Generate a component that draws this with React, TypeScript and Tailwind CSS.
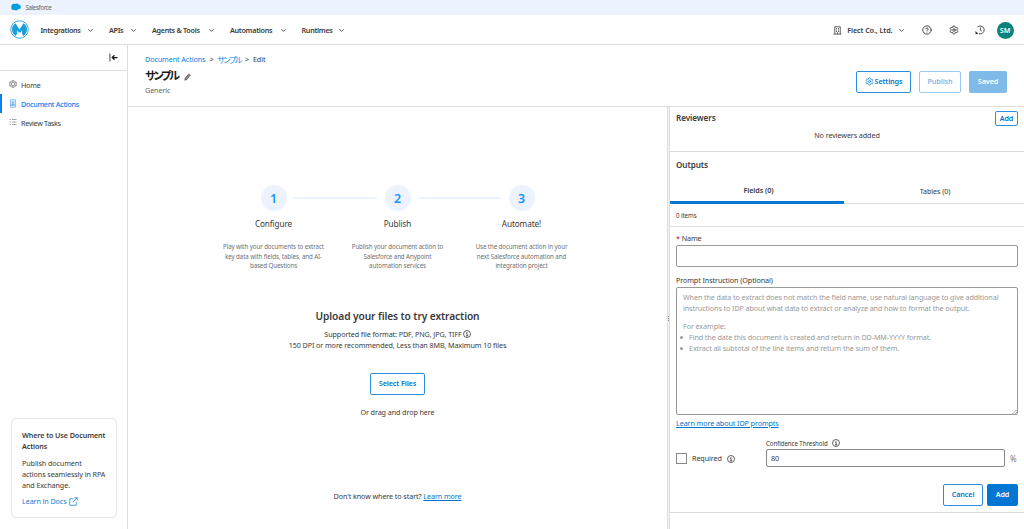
import React from "react";
import { ChevronDown, CircleHelp, Settings } from "lucide-react";

const navItems = [
  { label: "Integrations", width: "w-[68.500px]" },
  { label: "APIs", width: "w-[43px]" },
  { label: "Agents & Tools", width: "w-[78px]" },
  { label: "Automations", width: "w-[71.500px]" },
  { label: "Runtimes", width: "w-[58.500px]" },
];

const steps = [
  { id: 1, title: "Configure", lines: ["Play with your documents to extract", "key data with fields, tables, and AI-", "based Questions"] },
  { id: 2, title: "Publish", lines: ["Publish your document action to", "Salesforce and Anypoint", "automation services"] },
  { id: 3, title: "Automate!", lines: ["Use the document action in your", "next Salesforce automation and", "integration project"] },
];

const MuleLogo = () => (
  <svg className="h-[19px] w-[19px]" viewBox="0 0 38 38" fill="none">
    <circle cx="19" cy="19" r="17.500" stroke="#1c9edb" strokeWidth="1.800" />
    <path d="M11 6.500L19 19L27 6.500C31.500 9.300 34 13.800 34 19C34 24.500 31 29.300 26.500 32L24 27.500V20.500L21 25H17L14 20.500V27.500L11.500 32C7 29.300 4 24.500 4 19C4 13.800 6.500 9.300 11 6.500Z" fill="#1c9edb" />
  </svg>
);

const Cloud = () => (
  <svg className="h-[8px] w-[10px]" viewBox="0 0 20 15" fill="#009ddc">
    <circle cx="6" cy="6" r="5" />
    <circle cx="11.500" cy="5" r="4.500" />
    <circle cx="15.500" cy="7.500" r="4.300" />
    <circle cx="4.500" cy="9.500" r="4" />
    <circle cx="10" cy="10" r="4.500" />
  </svg>
);

const BuildingIcon = () => (
  <svg className="h-[9px] w-[9px]" viewBox="0 0 18 18" fill="none" stroke="#444" strokeWidth="1.700">
    <path d="M3.500 16V1.500H14.500V16M1 16.200H17M7 4V7M11 4V7M7 9V12M11 9V12M9 12.500V16" />
  </svg>
);

const HistoryIcon = () => (
  <svg className="h-[10px] w-[10px]" viewBox="0 0 20 20" fill="none" stroke="#333" strokeWidth="1.700">
    <path d="M5 4A8 8 0 1 1 8 17.500M11 5V10.500L13.500 12.500" />
    <path d="M1 12V18H7Z" fill="#333" stroke="none" />
  </svg>
);

const CollapseIcon = () => (
  <svg className="h-[9px] w-[9px]" viewBox="0 0 18 18" fill="none" stroke="#181818" strokeWidth="2.500">
    <path d="M1.800 1V17" stroke="#666" />
    <path d="M17 9H6.500M11 4.500L6.500 9L11 13.500" />
  </svg>
);

const CubeIcon = () => (
  <svg className="h-[8px] w-[8px]" viewBox="0 0 16 16" fill="none" stroke="#666" strokeWidth="1.300">
    <path d="M8 1L14.500 4.500V11.500L8 15L1.500 11.500V4.500Z" />
    <path d="M8 4.500L11 6.300V9.700L8 11.500L5 9.700V6.300ZM1.500 4.500L5 6.300M14.500 4.500L11 6.300M8 11.500V15M1.500 11.500L5 9.700M14.500 11.500L11 9.700M8 1V4.500" />
  </svg>
);

const DocIcon = () => (
  <svg className="h-[9px] w-[8px]" viewBox="0 0 16 18" fill="none" stroke="#4b9ff2" strokeWidth="1.300">
    <path d="M3 1.500H13V16.500H3ZM5 4.500H11M5 7H11" />
    <path d="M5.500 9.500H10.500V13.500H5.500Z" fill="#8dc3f8" />
  </svg>
);

const ListIcon = () => (
  <svg className="h-[8px] w-[8px]" viewBox="0 0 16 16" fill="none" stroke="#777" strokeWidth="1.300">
    <path d="M1 3L2 4L4 2M6 3H15M1 8H4M6 8H15M1 13H4M6 13H15" />
  </svg>
);

const PencilIcon = () => (
  <svg className="h-[8px] w-[7px]" viewBox="0 0 14 16" fill="#666">
    <path d="M9.500 1L13.500 4.500L5.500 14L1 15.500L1.500 10.500Z" />
    <path d="M8 3.500L11.500 6.500M4 12L9 6.500" stroke="white" strokeWidth="0.700" />
  </svg>
);

const InfoIcon = ({ className = "" }: { className?: string }) => (
  <svg className={`h-[8px] w-[8px] shrink-0 ${className}`} viewBox="0 0 16 16" fill="none" stroke="#333" strokeWidth="1.500">
    <circle cx="8" cy="8" r="7" />
    <path d="M6.300 7H8.300V11.500M6 11.700H10.500M8 3.700V5.500" strokeWidth="1.600" />
  </svg>
);

const ExternalIcon = () => (
  <svg className="ml-[2px] h-[9px] w-[9px]" viewBox="0 0 18 18" fill="none" stroke="#0b7fda" strokeWidth="1.500">
    <path d="M8 3.500H1.500V16.500H14.500V10M11 1.500H16.500V7M16.500 1.500L7.500 10.500" />
  </svg>
);

const App = () => {
  return (
    <div className="flex h-[529px] w-[1024px] flex-col overflow-hidden bg-white font-['Noto_Sans','Noto_Sans_CJK_JP',sans-serif] text-[7.200px] leading-[11px] tracking-[-0.013em] text-[#3a3a3a]">
      <div className="flex h-[15px] shrink-0 items-center bg-[#ecf3ff] pb-[1px] pl-[11px]">
        <Cloud />
        <span className="ml-[4.500px] pt-[1px] text-[6.200px] tracking-[-0.060em] text-[#666]">Salesforce</span>
      </div>
      <header className="flex h-[30px] shrink-0 items-center border-b border-[#ddd] pr-[10.500px] pl-[10px]">
        <MuleLogo />
        <nav className="ml-[11.500px] flex pt-[1px] font-semibold tracking-[-0.040em]">
          {navItems.map((item) => (
            <div key={item.label} className={`flex items-center ${item.width}`}>
              <button className="whitespace-nowrap">{item.label}</button>
              <ChevronDown className="mr-[15px] ml-auto h-[7px] w-[7px]" strokeWidth={3} />
            </div>
          ))}
        </nav>
        <div className="ml-auto flex items-center pt-[1px]">
          <BuildingIcon />
          <span className="ml-[5px] font-semibold">Flect Co., Ltd.</span>
          <ChevronDown className="ml-[5px] h-[7px] w-[7px]" strokeWidth={3} />
          <CircleHelp className="ml-[17px] h-[10px] w-[10px]" strokeWidth={2.200} />
          <Settings className="ml-[17px] h-[10px] w-[10px]" strokeWidth={2.200} />
          <span className="ml-[16px]"><HistoryIcon /></span>
          <div className="ml-[12px] flex h-[17px] w-[17px] items-center justify-center rounded-full bg-[#0b827c] font-semibold text-white">SM</div>
        </div>
      </header>

      <div className="flex min-h-0 flex-1">
        <aside className="flex w-[128px] shrink-0 flex-col border-r border-[#ddd]">
          <div className="flex h-[26px] items-center justify-end border-b border-[#ddd] pr-[9px]">
            <CollapseIcon />
          </div>
          <ul className="pt-[4px] tracking-[-0.045em]">
            <li className="flex h-[19px] items-center pl-[9px]"><span className="pb-[2px]"><CubeIcon /></span><span className="ml-[4px] pt-[1px] tracking-[-0.030em]">Home</span></li>
            <li className="flex h-[19px] items-center border-l-2 border-[#0b7fee] pl-[7px] font-medium text-[#0b7fee]"><span className="pb-[1px]"><DocIcon /></span><span className="ml-[4px] pt-[1px]">Document Actions</span></li>
            <li className="flex h-[19px] items-center pl-[9px]"><span className="pb-[1px]"><ListIcon /></span><span className="ml-[4px] pt-[1px]">Review Tasks</span></li>
          </ul>
          <div className="mt-auto mb-[11px] ml-[11px] h-[100px] w-[106px] rounded-[4px] border border-[#e5e5e5] px-[10px] pt-[11px]">
            <h3 className="font-semibold whitespace-nowrap">Where to Use Document<br />Actions</h3>
            <p className="mt-[6px] whitespace-nowrap">Publish document<br />actions seamlessly in RPA<br />and Exchange.</p>
            <a className="mt-[5px] flex items-center text-[#0b7fda]">Learn in Docs<ExternalIcon /></a>
          </div>
        </aside>

        <main className="flex min-w-0 flex-1 flex-col">
          <div className="flex h-[62px] shrink-0 border-b border-[#ddd] pr-[17px] pl-[17px]">
            <div className="pt-[9px]">
              <div className="flex gap-[4px]">
                <span className="text-[#0b7fda]">Document Actions</span><span>&gt;</span>
                <span className="text-[8px] tracking-[-0.180em] text-[#0b7fda] [font-feature-settings:'palt']">サンプル</span><span>&gt;</span><span>Edit</span>
              </div>
              <div className="mt-[3px] flex h-[16px] items-center">
                <h1 className="text-[11px] leading-[16px] font-bold tracking-[-0.190em] text-[#181818] [font-feature-settings:'palt']">サンプル</h1>
                <span className="ml-[6px] pt-[2px]"><PencilIcon /></span>
              </div>
              <p className="pt-[1px] text-[#666]">Generic</p>
            </div>
            <div className="ml-auto flex gap-[8px] pt-[26px] font-semibold">
              <button className="flex h-[21.500px] w-[55px] items-center justify-center rounded-[2px] border border-[#2b8ee0] text-[#0176d3]"><Settings className="mr-[1px] h-[9px] w-[9px]" strokeWidth={1.8} />Settings</button>
              <button className="h-[21.500px] w-[42px] rounded-[2px] border border-[#9bcaf0] text-[#80bae9]">Publish</button>
              <button className="h-[21.500px] w-[38px] rounded-[2px] bg-[#80bae9] text-white">Saved</button>
            </div>
          </div>

          <div className="flex min-h-0 flex-1">
            <section className="flex w-[539px] shrink-0 flex-col items-center text-center">
              <div className="mt-[78px] flex items-start">
                {steps.map((step, i) => (
                  <React.Fragment key={step.id}>
                    {i > 0 && <div className="-mx-[33px] mt-[12px] h-[2px] w-[83px] bg-[#ecf3ff]" />}
                    <div className="flex w-[107px] flex-col items-center">
                      <div className="flex h-[26px] w-[26px] items-center justify-center rounded-full bg-[#ecf3ff] text-[12.500px] font-semibold text-[#1b96ff]">{step.id}</div>
                      <h2 className="mt-[7px] text-[8.200px] leading-[12px]">{step.title}</h2>
                      <p className="mt-[12px] text-[6.200px] leading-[9.600px] tracking-[-0.016em] whitespace-nowrap text-[#707070]">
                        {step.lines.map((line) => <span key={line} className="block">{line}</span>)}
                      </p>
                    </div>
                  </React.Fragment>
                ))}
              </div>
              <h2 className="mt-[37px] text-[10.200px] leading-[16px] font-semibold">Upload your files to try extraction</h2>
              <p className="mt-[5px] flex items-center">Supported file format: PDF, PNG, JPG, TIFF<InfoIcon className="ml-[1px]" /></p>
              <p>150 DPI or more recommended, Less than 8MB, Maximum 10 files</p>
              <button className="mt-[22px] h-[22px] w-[55px] rounded-[2px] border border-[#2b8ee0] font-semibold text-[#0176d3]">Select Files</button>
              <p className="mt-[12px]">Or drag and drop here</p>
              <p className="mt-[73px]">Don't know where to start? <a className="text-[#0176d3] underline">Learn more</a></p>
            </section>

            <div className="flex w-[3px] shrink-0 flex-col items-center justify-center gap-[1px] border-r border-l border-[#ddd] bg-[#f3f3f3]">
              <span className="h-px w-px bg-[#999]" />
              <span className="h-px w-px bg-[#999]" />
              <span className="h-px w-px bg-[#999]" />
            </div>

            <section className="min-w-0 flex-1">
              <div className="h-[44.500px] border-b border-[#ddd] pt-[4px] pr-[6px] pl-[6px]">
                <div className="flex justify-between">
                  <h2 className="pt-[1px] text-[8.200px] font-semibold">Reviewers</h2>
                  <button className="h-[15px] w-[23px] rounded-[2px] border border-[#2b8ee0] font-semibold text-[#0176d3]">Add</button>
                </div>
                <p className="mt-[4px] text-center">No reviewers added</p>
              </div>
              <h2 className="pt-[7px] pl-[6px] text-[8.200px] font-semibold">Outputs</h2>
              <div className="mt-[10px] flex h-[24px] text-center leading-[21px]">
                <button className="w-[174px] rounded-b-[1px] border-b-[3px] border-[#0176d3] pl-[3px] font-semibold">Fields (0)</button>
                <button className="flex-1 border-b border-[#ddd] pl-[2px]">Tables (0)</button>
              </div>
              <p className="h-[23px] border-b border-[#ddd] pl-[6px] text-[6.200px] leading-[23px]">0 items</p>
              <form className="h-[286px] border-b border-[#ddd] pt-[6px] pr-[6px] pl-[6px]">
                <label className="block"><span className="text-[#ba0517]">*</span> Name</label>
                <input className="mt-[1px] block h-[22px] w-full rounded-[2px] border border-[#999]" />
                <label className="mt-[8px] block">Prompt Instruction (Optional)</label>
                <div className="relative mt-[1px] h-[128px] rounded-[2px] border border-[#999] px-[6px] pt-[4px] whitespace-nowrap text-[#999]">
                  <p>When the data to extract does not match the field name, use natural language to give additional<br />instructions to IDP about what data to extract or analyze and how to format the output.</p>
                  <p className="mt-[7px]">For example:</p>
                  <ul className="-ml-[3px]">
                    <li className="flex items-center"><span className="mr-[6px] h-[3px] w-[3px] rounded-full bg-[#999]" />Find the date this document is created and return in DD-MM-YYYY format.</li>
                    <li className="flex items-center"><span className="mr-[6px] h-[3px] w-[3px] rounded-full bg-[#999]" />Extract all subtotal of the line items and return the sum of them.</li>
                  </ul>
                  <svg className="absolute right-0 bottom-0 h-[5px] w-[5px]" viewBox="0 0 10 10" stroke="#888" strokeWidth="1.400">
                    <path d="M1 10L10 1M6 10L10 6" />
                  </svg>
                </div>
                <a className="mt-[3px] block text-[#0176d3] underline">Learn more about IDP prompts</a>
                <div className="mt-[9px] flex">
                  <div className="mt-[12px] flex h-[18px] w-[90px] items-center">
                    <span className="mr-[5px] h-[11px] w-[11px] border border-[#888]" />Required<InfoIcon className="ml-[5px]" />
                  </div>
                  <div className="w-[239px]">
                    <label className="flex h-[11px] items-center text-[6.200px]">Confidence Threshold<InfoIcon className="ml-[4.500px]" /></label>
                    <input className="block h-[18px] w-full rounded-[2px] border border-[#888] pl-[4px]" defaultValue="80" />
                  </div>
                  <span className="mt-[15px] ml-[5px] text-[8px] text-[#777]">%</span>
                </div>
                <div className="mt-[16px] flex justify-end gap-[4px] font-semibold">
                  <button type="button" className="h-[22px] w-[40px] rounded-[2px] border border-[#2b8ee0] text-[#0176d3]">Cancel</button>
                  <button type="button" className="h-[22px] w-[31px] rounded-[2px] bg-[#0176d3] text-white">Add</button>
                </div>
              </form>
            </section>
          </div>
        </main>
      </div>
    </div>
  );
};

export default App;
